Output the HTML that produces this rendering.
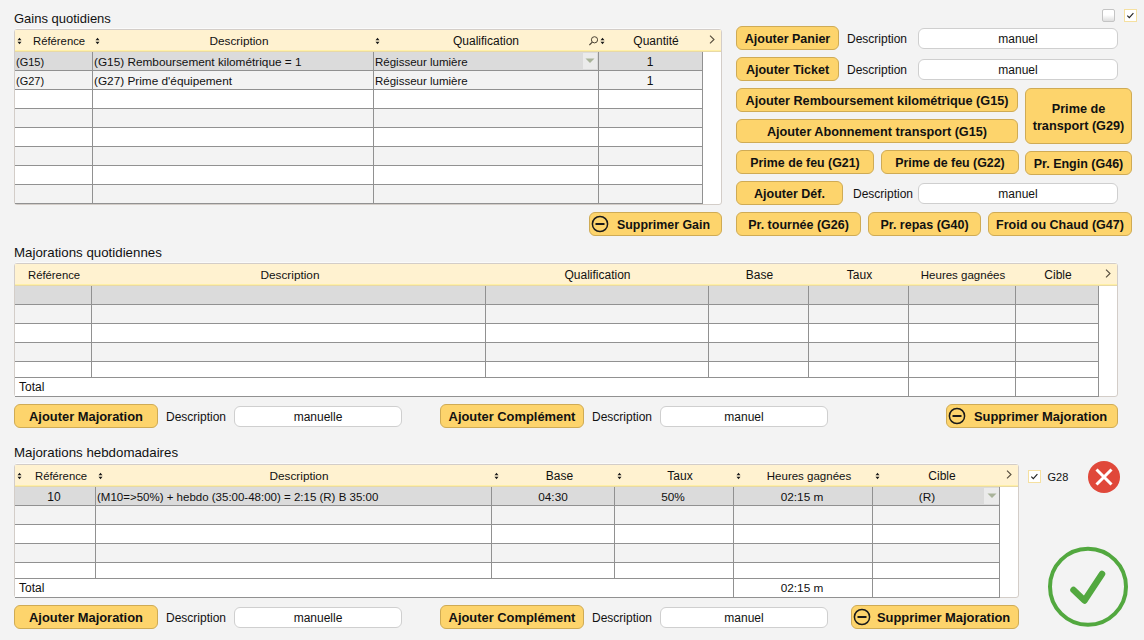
<!DOCTYPE html><html><head><meta charset="utf-8"><style>
html,body{margin:0;padding:0;}
body{width:1144px;height:640px;overflow:hidden;background:#f3f3f3;font-family:"Liberation Sans",sans-serif;position:relative;}
</style></head><body>
<div style="position:absolute;left:14px;top:11px;height:16px;line-height:16px;font-size:13px;color:#111111;white-space:nowrap;">Gains quotidiens</div>
<div style="position:absolute;left:14px;top:29px;width:706px;height:174px;background:#fff;border:1px solid #d3cdc8;border-radius:3px;"></div>
<div style="position:absolute;left:15px;top:30px;width:706px;height:21px;background:#fff2d0;border-bottom:1px solid #e8d9a6;"></div>
<div style="position:absolute;left:15px;top:50px;width:706px;height:1px;background:#fff0a6;"></div>
<div style="position:absolute;left:16px;top:28px;width:704px;height:1px;background:#fafafa;"></div>
<div style="position:absolute;left:15px;top:52px;width:687px;height:18px;background:#dbdbdb;"></div>
<div style="position:absolute;left:15px;top:70px;width:687px;height:1px;background:#919191;"></div>
<div style="position:absolute;left:15px;top:71px;width:687px;height:18px;background:#f3f3f3;"></div>
<div style="position:absolute;left:15px;top:89px;width:687px;height:1px;background:#919191;"></div>
<div style="position:absolute;left:15px;top:90px;width:687px;height:18px;background:#ffffff;"></div>
<div style="position:absolute;left:15px;top:108px;width:687px;height:1px;background:#919191;"></div>
<div style="position:absolute;left:15px;top:109px;width:687px;height:18px;background:#f3f3f3;"></div>
<div style="position:absolute;left:15px;top:127px;width:687px;height:1px;background:#919191;"></div>
<div style="position:absolute;left:15px;top:128px;width:687px;height:18px;background:#ffffff;"></div>
<div style="position:absolute;left:15px;top:146px;width:687px;height:1px;background:#919191;"></div>
<div style="position:absolute;left:15px;top:147px;width:687px;height:18px;background:#f3f3f3;"></div>
<div style="position:absolute;left:15px;top:165px;width:687px;height:1px;background:#919191;"></div>
<div style="position:absolute;left:15px;top:166px;width:687px;height:18px;background:#ffffff;"></div>
<div style="position:absolute;left:15px;top:184px;width:687px;height:1px;background:#919191;"></div>
<div style="position:absolute;left:15px;top:185px;width:687px;height:18px;background:#f3f3f3;"></div>
<div style="position:absolute;left:15px;top:203px;width:687px;height:1px;background:#919191;"></div>
<div style="position:absolute;left:92px;top:52px;width:1px;height:151px;background:#919191;"></div>
<div style="position:absolute;left:373px;top:52px;width:1px;height:151px;background:#919191;"></div>
<div style="position:absolute;left:598px;top:52px;width:1px;height:151px;background:#919191;"></div>
<div style="position:absolute;left:702px;top:52px;width:1px;height:152px;background:#919191;"></div>
<svg style="position:absolute;left:17px;top:36.5px" width="5" height="8" viewBox="0 0 5 8"><path d="M0.5 3.2 L2.5 0.8 L4.5 3.2Z M0.5 4.8 L2.5 7.2 L4.5 4.8Z" fill="#1a1a1a"/></svg>
<div style="position:absolute;left:33px;top:32.5px;height:16px;line-height:16px;font-size:11.3px;color:#111111;white-space:nowrap;">Référence</div>
<svg style="position:absolute;left:95px;top:36.5px" width="5" height="8" viewBox="0 0 5 8"><path d="M0.5 3.2 L2.5 0.8 L4.5 3.2Z M0.5 4.8 L2.5 7.2 L4.5 4.8Z" fill="#1a1a1a"/></svg>
<div style="position:absolute;left:-61px;width:600px;text-align:center;top:32.5px;height:16px;line-height:16px;font-size:11.8px;font-weight:normal;color:#111111;white-space:nowrap;">Description</div>
<svg style="position:absolute;left:375px;top:36.5px" width="5" height="8" viewBox="0 0 5 8"><path d="M0.5 3.2 L2.5 0.8 L4.5 3.2Z M0.5 4.8 L2.5 7.2 L4.5 4.8Z" fill="#1a1a1a"/></svg>
<div style="position:absolute;left:186px;width:600px;text-align:center;top:32.5px;height:16px;line-height:16px;font-size:12px;font-weight:normal;color:#111111;white-space:nowrap;">Qualification</div>
<svg style="position:absolute;left:588px;top:34.5px" width="10" height="11" viewBox="0 0 10 11"><circle cx="6.5" cy="4.8" r="3.1" fill="none" stroke="#4a4234" stroke-width="1"/><path d="M4.3 7.1 L1.4 10" stroke="#4a4234" stroke-width="1.1"/></svg>
<svg style="position:absolute;left:600px;top:36.5px" width="5" height="8" viewBox="0 0 5 8"><path d="M0.5 3.2 L2.5 0.8 L4.5 3.2Z M0.5 4.8 L2.5 7.2 L4.5 4.8Z" fill="#1a1a1a"/></svg>
<div style="position:absolute;left:356px;width:600px;text-align:center;top:32.5px;height:16px;line-height:16px;font-size:12px;font-weight:normal;color:#111111;white-space:nowrap;">Quantité</div>
<svg style="position:absolute;left:708px;top:33.5px" width="8" height="12" viewBox="0 0 8 12"><path d="M2 1.6 L6 5.5 L2 9.4" fill="none" stroke="#554c3c" stroke-width="1.1"/></svg>
<div style="position:absolute;left:16px;top:53.5px;height:16px;line-height:16px;font-size:11px;color:#111111;white-space:nowrap;">(G15)</div>
<div style="position:absolute;left:94px;top:53.5px;height:16px;line-height:16px;font-size:11.8px;color:#111111;white-space:nowrap;">(G15) Remboursement kilométrique = 1</div>
<div style="position:absolute;left:375px;top:53.5px;height:16px;line-height:16px;font-size:11.5px;color:#111111;white-space:nowrap;">Régisseur lumière</div>
<div style="position:absolute;left:350px;width:600px;text-align:center;top:53.5px;height:16px;line-height:16px;font-size:12px;font-weight:normal;color:#111111;white-space:nowrap;">1</div>
<div style="position:absolute;left:583px;top:53px;width:14px;height:16px;background:#ebebeb;"></div>
<svg style="position:absolute;left:585.0px;top:58.0px" width="10" height="6" viewBox="0 0 10 6"><path d="M0.5 0.5 L9.5 0.5 L5 5Z" fill="#a9b39a"/></svg>
<div style="position:absolute;left:16px;top:72.5px;height:16px;line-height:16px;font-size:11px;color:#111111;white-space:nowrap;">(G27)</div>
<div style="position:absolute;left:94px;top:72.5px;height:16px;line-height:16px;font-size:11.8px;color:#111111;white-space:nowrap;">(G27) Prime d'équipement</div>
<div style="position:absolute;left:375px;top:72.5px;height:16px;line-height:16px;font-size:11.5px;color:#111111;white-space:nowrap;">Régisseur lumière</div>
<div style="position:absolute;left:350px;width:600px;text-align:center;top:72.5px;height:16px;line-height:16px;font-size:12px;font-weight:normal;color:#111111;white-space:nowrap;">1</div>
<div style="position:absolute;left:589px;top:212px;width:131px;height:22px;background:#fdd46c;border:1px solid #cfab55;border-radius:6px;"></div>
<svg style="position:absolute;left:591px;top:215.0px" width="18" height="18" viewBox="0 0 18 18"><circle cx="9" cy="9" r="7.6" fill="none" stroke="#1a1a1a" stroke-width="1.5"/><rect x="4.5" y="8" width="9" height="2" fill="#1a1a1a"/></svg>
<div style="position:absolute;left:617px;top:213px;height:24px;line-height:24px;font-size:12.4px;font-weight:bold;color:#111111;white-space:nowrap;">Supprimer Gain</div>
<div style="position:absolute;left:736px;top:26px;width:101px;height:22px;background:#fdd46c;border:1px solid #cfab55;border-radius:6px;"></div>
<div style="position:absolute;left:736px;width:103px;top:27px;height:24px;line-height:24px;text-align:center;font-size:12.5px;font-weight:bold;color:#111111;white-space:nowrap;">Ajouter Panier</div>
<div style="position:absolute;left:847px;top:30.5px;height:16px;line-height:16px;font-size:12px;color:#111111;white-space:nowrap;">Description</div>
<div style="position:absolute;left:918px;top:28px;width:198px;height:19px;background:#fff;border:1px solid #cfcfcf;border-radius:6px;"></div>
<div style="position:absolute;left:918px;width:200px;top:28.5px;height:21px;line-height:21px;text-align:center;font-size:12px;color:#111111;white-space:nowrap;">manuel</div>
<div style="position:absolute;left:736px;top:57px;width:101px;height:22px;background:#fdd46c;border:1px solid #cfab55;border-radius:6px;"></div>
<div style="position:absolute;left:736px;width:103px;top:58px;height:24px;line-height:24px;text-align:center;font-size:12.5px;font-weight:bold;color:#111111;white-space:nowrap;">Ajouter Ticket</div>
<div style="position:absolute;left:847px;top:61.5px;height:16px;line-height:16px;font-size:12px;color:#111111;white-space:nowrap;">Description</div>
<div style="position:absolute;left:918px;top:59px;width:198px;height:19px;background:#fff;border:1px solid #cfcfcf;border-radius:6px;"></div>
<div style="position:absolute;left:918px;width:200px;top:59.5px;height:21px;line-height:21px;text-align:center;font-size:12px;color:#111111;white-space:nowrap;">manuel</div>
<div style="position:absolute;left:736px;top:88px;width:280px;height:22px;background:#fdd46c;border:1px solid #cfab55;border-radius:6px;"></div>
<div style="position:absolute;left:736px;width:282px;top:89px;height:24px;line-height:24px;text-align:center;font-size:12.7px;font-weight:bold;color:#111111;white-space:nowrap;">Ajouter Remboursement kilométrique (G15)</div>
<div style="position:absolute;left:1025px;top:88px;width:105px;height:54px;background:#fdd46c;border:1px solid #cfab55;border-radius:6px;"></div>
<div style="position:absolute;left:1025px;width:107px;top:100.5px;height:17px;line-height:17px;text-align:center;font-size:12.7px;font-weight:bold;color:#111111;white-space:nowrap;">Prime de</div>
<div style="position:absolute;left:1025px;width:107px;top:117.5px;height:17px;line-height:17px;text-align:center;font-size:12.7px;font-weight:bold;color:#111111;white-space:nowrap;">transport (G29)</div>
<div style="position:absolute;left:736px;top:119px;width:280px;height:22px;background:#fdd46c;border:1px solid #cfab55;border-radius:6px;"></div>
<div style="position:absolute;left:736px;width:282px;top:120px;height:24px;line-height:24px;text-align:center;font-size:12.7px;font-weight:bold;color:#111111;white-space:nowrap;">Ajouter Abonnement transport (G15)</div>
<div style="position:absolute;left:736px;top:150px;width:136px;height:22px;background:#fdd46c;border:1px solid #cfab55;border-radius:6px;"></div>
<div style="position:absolute;left:736px;width:138px;top:151px;height:24px;line-height:24px;text-align:center;font-size:12.4px;font-weight:bold;color:#111111;white-space:nowrap;">Prime de feu (G21)</div>
<div style="position:absolute;left:881px;top:150px;width:136px;height:22px;background:#fdd46c;border:1px solid #cfab55;border-radius:6px;"></div>
<div style="position:absolute;left:881px;width:138px;top:151px;height:24px;line-height:24px;text-align:center;font-size:12.4px;font-weight:bold;color:#111111;white-space:nowrap;">Prime de feu (G22)</div>
<div style="position:absolute;left:1025px;top:151px;width:105px;height:22px;background:#fdd46c;border:1px solid #cfab55;border-radius:6px;"></div>
<div style="position:absolute;left:1025px;width:107px;top:152px;height:24px;line-height:24px;text-align:center;font-size:12.5px;font-weight:bold;color:#111111;white-space:nowrap;">Pr. Engin (G46)</div>
<div style="position:absolute;left:736px;top:181px;width:105px;height:22px;background:#fdd46c;border:1px solid #cfab55;border-radius:6px;"></div>
<div style="position:absolute;left:736px;width:107px;top:182px;height:24px;line-height:24px;text-align:center;font-size:12.5px;font-weight:bold;color:#111111;white-space:nowrap;">Ajouter Déf.</div>
<div style="position:absolute;left:853px;top:185.5px;height:16px;line-height:16px;font-size:12px;color:#111111;white-space:nowrap;">Description</div>
<div style="position:absolute;left:918px;top:183px;width:198px;height:19px;background:#fff;border:1px solid #cfcfcf;border-radius:6px;"></div>
<div style="position:absolute;left:918px;width:200px;top:183.5px;height:21px;line-height:21px;text-align:center;font-size:12px;color:#111111;white-space:nowrap;">manuel</div>
<div style="position:absolute;left:736px;top:212px;width:123px;height:22px;background:#fdd46c;border:1px solid #cfab55;border-radius:6px;"></div>
<div style="position:absolute;left:736px;width:125px;top:213px;height:24px;line-height:24px;text-align:center;font-size:12.5px;font-weight:bold;color:#111111;white-space:nowrap;">Pr. tournée (G26)</div>
<div style="position:absolute;left:868px;top:212px;width:111px;height:22px;background:#fdd46c;border:1px solid #cfab55;border-radius:6px;"></div>
<div style="position:absolute;left:868px;width:113px;top:213px;height:24px;line-height:24px;text-align:center;font-size:12.5px;font-weight:bold;color:#111111;white-space:nowrap;">Pr. repas (G40)</div>
<div style="position:absolute;left:988px;top:212px;width:142px;height:22px;background:#fdd46c;border:1px solid #cfab55;border-radius:6px;"></div>
<div style="position:absolute;left:988px;width:144px;top:213px;height:24px;line-height:24px;text-align:center;font-size:12.5px;font-weight:bold;color:#111111;white-space:nowrap;">Froid ou Chaud (G47)</div>
<div style="position:absolute;left:1102px;top:9px;width:11px;height:11px;border:1px solid #c4c4c4;border-radius:2px;background:linear-gradient(#ffffff 45%,#dedede);"></div>
<div style="position:absolute;left:1124px;top:9px;width:11px;height:11px;border:1px solid #f5e0a0;background:#fff;"></div>
<svg style="position:absolute;left:1124px;top:9px" width="13" height="13" viewBox="0 0 13 13"><path d="M3.3 6.6 L5.3 8.6 L9.4 4.2" fill="none" stroke="#222" stroke-width="1.15"/></svg>
<div style="position:absolute;left:14px;top:244.5px;height:16px;line-height:16px;font-size:13.3px;color:#111111;white-space:nowrap;">Majorations quotidiennes</div>
<div style="position:absolute;left:14px;top:263px;width:1102px;height:132px;background:#fff;border:1px solid #d3cdc8;border-radius:3px;"></div>
<div style="position:absolute;left:15px;top:264px;width:1102px;height:21px;background:#fff2d0;border-bottom:1px solid #e8d9a6;"></div>
<div style="position:absolute;left:15px;top:284px;width:1102px;height:1px;background:#fff0a6;"></div>
<div style="position:absolute;left:16px;top:262px;width:1100px;height:1px;background:#fafafa;"></div>
<div style="position:absolute;left:15px;top:286px;width:1083px;height:18px;background:#dbdbdb;"></div>
<div style="position:absolute;left:15px;top:304px;width:1083px;height:1px;background:#919191;"></div>
<div style="position:absolute;left:15px;top:305px;width:1083px;height:18px;background:#f3f3f3;"></div>
<div style="position:absolute;left:15px;top:323px;width:1083px;height:1px;background:#919191;"></div>
<div style="position:absolute;left:15px;top:324px;width:1083px;height:18px;background:#ffffff;"></div>
<div style="position:absolute;left:15px;top:342px;width:1083px;height:1px;background:#919191;"></div>
<div style="position:absolute;left:15px;top:343px;width:1083px;height:18px;background:#f3f3f3;"></div>
<div style="position:absolute;left:15px;top:361px;width:1083px;height:1px;background:#919191;"></div>
<div style="position:absolute;left:15px;top:362px;width:1083px;height:15px;background:#ffffff;"></div>
<div style="position:absolute;left:15px;top:377px;width:1083px;height:1px;background:#919191;"></div>
<div style="position:absolute;left:91px;top:286px;width:1px;height:91px;background:#919191;"></div>
<div style="position:absolute;left:485px;top:286px;width:1px;height:91px;background:#919191;"></div>
<div style="position:absolute;left:708px;top:286px;width:1px;height:91px;background:#919191;"></div>
<div style="position:absolute;left:808px;top:286px;width:1px;height:91px;background:#919191;"></div>
<div style="position:absolute;left:908px;top:286px;width:1px;height:91px;background:#919191;"></div>
<div style="position:absolute;left:1015px;top:286px;width:1px;height:91px;background:#919191;"></div>
<div style="position:absolute;left:1098px;top:286px;width:1px;height:110px;background:#919191;"></div>
<div style="position:absolute;left:15px;top:378px;width:1083px;height:18px;background:#fff;"></div>
<div style="position:absolute;left:15px;top:396px;width:1084px;height:1px;background:#919191;"></div>
<div style="position:absolute;left:908px;top:378px;width:1px;height:18px;background:#919191;"></div>
<div style="position:absolute;left:1015px;top:378px;width:1px;height:18px;background:#919191;"></div>
<div style="position:absolute;left:28px;top:266.5px;height:16px;line-height:16px;font-size:11.3px;color:#111111;white-space:nowrap;">Référence</div>
<div style="position:absolute;left:-10px;width:600px;text-align:center;top:266.5px;height:16px;line-height:16px;font-size:11.8px;font-weight:normal;color:#111111;white-space:nowrap;">Description</div>
<div style="position:absolute;left:297.5px;width:600px;text-align:center;top:266.5px;height:16px;line-height:16px;font-size:12px;font-weight:normal;color:#111111;white-space:nowrap;">Qualification</div>
<div style="position:absolute;left:459.5px;width:600px;text-align:center;top:266.5px;height:16px;line-height:16px;font-size:12px;font-weight:normal;color:#111111;white-space:nowrap;">Base</div>
<div style="position:absolute;left:559.5px;width:600px;text-align:center;top:266.5px;height:16px;line-height:16px;font-size:12px;font-weight:normal;color:#111111;white-space:nowrap;">Taux</div>
<div style="position:absolute;left:663px;width:600px;text-align:center;top:266.5px;height:16px;line-height:16px;font-size:11.5px;font-weight:normal;color:#111111;white-space:nowrap;">Heures gagnées</div>
<div style="position:absolute;left:758px;width:600px;text-align:center;top:266.5px;height:16px;line-height:16px;font-size:12px;font-weight:normal;color:#111111;white-space:nowrap;">Cible</div>
<svg style="position:absolute;left:1104px;top:267.5px" width="8" height="12" viewBox="0 0 8 12"><path d="M2 1.6 L6 5.5 L2 9.4" fill="none" stroke="#554c3c" stroke-width="1.1"/></svg>
<div style="position:absolute;left:19px;top:378.5px;height:16px;line-height:16px;font-size:12px;color:#111111;white-space:nowrap;">Total</div>
<div style="position:absolute;left:14px;top:404px;width:142px;height:22px;background:#fdd46c;border:1px solid #cfab55;border-radius:6px;"></div>
<div style="position:absolute;left:14px;width:144px;top:405px;height:24px;line-height:24px;text-align:center;font-size:12.9px;font-weight:bold;color:#111111;white-space:nowrap;">Ajouter Majoration</div>
<div style="position:absolute;left:166px;top:408.5px;height:16px;line-height:16px;font-size:12px;color:#111111;white-space:nowrap;">Description</div>
<div style="position:absolute;left:234px;top:406px;width:166px;height:19px;background:#fff;border:1px solid #cfcfcf;border-radius:6px;"></div>
<div style="position:absolute;left:234px;width:168px;top:406.5px;height:21px;line-height:21px;text-align:center;font-size:12px;color:#111111;white-space:nowrap;">manuelle</div>
<div style="position:absolute;left:440px;top:404px;width:142px;height:22px;background:#fdd46c;border:1px solid #cfab55;border-radius:6px;"></div>
<div style="position:absolute;left:440px;width:144px;top:405px;height:24px;line-height:24px;text-align:center;font-size:12.9px;font-weight:bold;color:#111111;white-space:nowrap;">Ajouter Complément</div>
<div style="position:absolute;left:592px;top:408.5px;height:16px;line-height:16px;font-size:12px;color:#111111;white-space:nowrap;">Description</div>
<div style="position:absolute;left:660px;top:406px;width:166px;height:19px;background:#fff;border:1px solid #cfcfcf;border-radius:6px;"></div>
<div style="position:absolute;left:660px;width:168px;top:406.5px;height:21px;line-height:21px;text-align:center;font-size:12px;color:#111111;white-space:nowrap;">manuel</div>
<div style="position:absolute;left:946px;top:404px;width:170px;height:22px;background:#fdd46c;border:1px solid #cfab55;border-radius:6px;"></div>
<svg style="position:absolute;left:948px;top:407.0px" width="18" height="18" viewBox="0 0 18 18"><circle cx="9" cy="9" r="7.6" fill="none" stroke="#1a1a1a" stroke-width="1.5"/><rect x="4.5" y="8" width="9" height="2" fill="#1a1a1a"/></svg>
<div style="position:absolute;left:974px;top:405px;height:24px;line-height:24px;font-size:12.9px;font-weight:bold;color:#111111;white-space:nowrap;">Supprimer Majoration</div>
<div style="position:absolute;left:14px;top:445px;height:16px;line-height:16px;font-size:13.3px;color:#111111;white-space:nowrap;">Majorations hebdomadaires</div>
<div style="position:absolute;left:14px;top:464px;width:1003px;height:132px;background:#fff;border:1px solid #d3cdc8;border-radius:3px;"></div>
<div style="position:absolute;left:15px;top:465px;width:1003px;height:21px;background:#fff2d0;border-bottom:1px solid #e8d9a6;"></div>
<div style="position:absolute;left:15px;top:485px;width:1003px;height:1px;background:#fff0a6;"></div>
<div style="position:absolute;left:16px;top:463px;width:1001px;height:1px;background:#fafafa;"></div>
<div style="position:absolute;left:15px;top:487px;width:984px;height:18px;background:#dbdbdb;"></div>
<div style="position:absolute;left:15px;top:505px;width:984px;height:1px;background:#919191;"></div>
<div style="position:absolute;left:15px;top:506px;width:984px;height:18px;background:#f3f3f3;"></div>
<div style="position:absolute;left:15px;top:524px;width:984px;height:1px;background:#919191;"></div>
<div style="position:absolute;left:15px;top:525px;width:984px;height:18px;background:#ffffff;"></div>
<div style="position:absolute;left:15px;top:543px;width:984px;height:1px;background:#919191;"></div>
<div style="position:absolute;left:15px;top:544px;width:984px;height:18px;background:#f3f3f3;"></div>
<div style="position:absolute;left:15px;top:562px;width:984px;height:1px;background:#919191;"></div>
<div style="position:absolute;left:15px;top:563px;width:984px;height:15px;background:#ffffff;"></div>
<div style="position:absolute;left:15px;top:578px;width:984px;height:1px;background:#919191;"></div>
<div style="position:absolute;left:95px;top:487px;width:1px;height:91px;background:#919191;"></div>
<div style="position:absolute;left:491px;top:487px;width:1px;height:91px;background:#919191;"></div>
<div style="position:absolute;left:614px;top:487px;width:1px;height:91px;background:#919191;"></div>
<div style="position:absolute;left:733px;top:487px;width:1px;height:91px;background:#919191;"></div>
<div style="position:absolute;left:872px;top:487px;width:1px;height:91px;background:#919191;"></div>
<div style="position:absolute;left:999px;top:487px;width:1px;height:110px;background:#919191;"></div>
<div style="position:absolute;left:15px;top:579px;width:984px;height:18px;background:#fff;"></div>
<div style="position:absolute;left:15px;top:597px;width:985px;height:1px;background:#919191;"></div>
<div style="position:absolute;left:733px;top:579px;width:1px;height:18px;background:#919191;"></div>
<div style="position:absolute;left:872px;top:579px;width:1px;height:18px;background:#919191;"></div>
<svg style="position:absolute;left:17px;top:471.5px" width="5" height="8" viewBox="0 0 5 8"><path d="M0.5 3.2 L2.5 0.8 L4.5 3.2Z M0.5 4.8 L2.5 7.2 L4.5 4.8Z" fill="#1a1a1a"/></svg>
<div style="position:absolute;left:35px;top:467.5px;height:16px;line-height:16px;font-size:11.3px;color:#111111;white-space:nowrap;">Référence</div>
<svg style="position:absolute;left:98px;top:471.5px" width="5" height="8" viewBox="0 0 5 8"><path d="M0.5 3.2 L2.5 0.8 L4.5 3.2Z M0.5 4.8 L2.5 7.2 L4.5 4.8Z" fill="#1a1a1a"/></svg>
<div style="position:absolute;left:-1px;width:600px;text-align:center;top:467.5px;height:16px;line-height:16px;font-size:11.8px;font-weight:normal;color:#111111;white-space:nowrap;">Description</div>
<svg style="position:absolute;left:494px;top:471.5px" width="5" height="8" viewBox="0 0 5 8"><path d="M0.5 3.2 L2.5 0.8 L4.5 3.2Z M0.5 4.8 L2.5 7.2 L4.5 4.8Z" fill="#1a1a1a"/></svg>
<div style="position:absolute;left:259.5px;width:600px;text-align:center;top:467.5px;height:16px;line-height:16px;font-size:12px;font-weight:normal;color:#111111;white-space:nowrap;">Base</div>
<svg style="position:absolute;left:617px;top:471.5px" width="5" height="8" viewBox="0 0 5 8"><path d="M0.5 3.2 L2.5 0.8 L4.5 3.2Z M0.5 4.8 L2.5 7.2 L4.5 4.8Z" fill="#1a1a1a"/></svg>
<div style="position:absolute;left:380px;width:600px;text-align:center;top:467.5px;height:16px;line-height:16px;font-size:12px;font-weight:normal;color:#111111;white-space:nowrap;">Taux</div>
<svg style="position:absolute;left:736px;top:471.5px" width="5" height="8" viewBox="0 0 5 8"><path d="M0.5 3.2 L2.5 0.8 L4.5 3.2Z M0.5 4.8 L2.5 7.2 L4.5 4.8Z" fill="#1a1a1a"/></svg>
<div style="position:absolute;left:509px;width:600px;text-align:center;top:467.5px;height:16px;line-height:16px;font-size:11.5px;font-weight:normal;color:#111111;white-space:nowrap;">Heures gagnées</div>
<svg style="position:absolute;left:875px;top:471.5px" width="5" height="8" viewBox="0 0 5 8"><path d="M0.5 3.2 L2.5 0.8 L4.5 3.2Z M0.5 4.8 L2.5 7.2 L4.5 4.8Z" fill="#1a1a1a"/></svg>
<div style="position:absolute;left:642px;width:600px;text-align:center;top:467.5px;height:16px;line-height:16px;font-size:12px;font-weight:normal;color:#111111;white-space:nowrap;">Cible</div>
<svg style="position:absolute;left:1005px;top:468.5px" width="8" height="12" viewBox="0 0 8 12"><path d="M2 1.6 L6 5.5 L2 9.4" fill="none" stroke="#554c3c" stroke-width="1.1"/></svg>
<div style="position:absolute;left:-246px;width:600px;text-align:center;top:489px;height:16px;line-height:16px;font-size:12px;font-weight:normal;color:#111111;white-space:nowrap;">10</div>
<div style="position:absolute;left:97px;top:489px;height:16px;line-height:16px;font-size:11.5px;color:#111111;white-space:nowrap;">(M10=&gt;50%) + hebdo (35:00-48:00) = 2:15 (R) B 35:00</div>
<div style="position:absolute;left:253px;width:600px;text-align:center;top:489px;height:16px;line-height:16px;font-size:11.8px;font-weight:normal;color:#111111;white-space:nowrap;">04:30</div>
<div style="position:absolute;left:373px;width:600px;text-align:center;top:489px;height:16px;line-height:16px;font-size:11.8px;font-weight:normal;color:#111111;white-space:nowrap;">50%</div>
<div style="position:absolute;left:502px;width:600px;text-align:center;top:489px;height:16px;line-height:16px;font-size:11.8px;font-weight:normal;color:#111111;white-space:nowrap;">02:15 m</div>
<div style="position:absolute;left:627px;width:600px;text-align:center;top:489px;height:16px;line-height:16px;font-size:11.8px;font-weight:normal;color:#111111;white-space:nowrap;">(R)</div>
<div style="position:absolute;left:984px;top:488px;width:15px;height:16px;background:#ebebeb;"></div>
<svg style="position:absolute;left:986.5px;top:493.0px" width="10" height="6" viewBox="0 0 10 6"><path d="M0.5 0.5 L9.5 0.5 L5 5Z" fill="#a9b39a"/></svg>
<div style="position:absolute;left:19px;top:579.5px;height:16px;line-height:16px;font-size:12px;color:#111111;white-space:nowrap;">Total</div>
<div style="position:absolute;left:502px;width:600px;text-align:center;top:579.5px;height:16px;line-height:16px;font-size:11.8px;font-weight:normal;color:#111111;white-space:nowrap;">02:15 m</div>
<div style="position:absolute;left:14px;top:605px;width:142px;height:22px;background:#fdd46c;border:1px solid #cfab55;border-radius:6px;"></div>
<div style="position:absolute;left:14px;width:144px;top:606px;height:24px;line-height:24px;text-align:center;font-size:12.9px;font-weight:bold;color:#111111;white-space:nowrap;">Ajouter Majoration</div>
<div style="position:absolute;left:166px;top:609.5px;height:16px;line-height:16px;font-size:12px;color:#111111;white-space:nowrap;">Description</div>
<div style="position:absolute;left:234px;top:607px;width:166px;height:19px;background:#fff;border:1px solid #cfcfcf;border-radius:6px;"></div>
<div style="position:absolute;left:234px;width:168px;top:607.5px;height:21px;line-height:21px;text-align:center;font-size:12px;color:#111111;white-space:nowrap;">manuelle</div>
<div style="position:absolute;left:440px;top:605px;width:142px;height:22px;background:#fdd46c;border:1px solid #cfab55;border-radius:6px;"></div>
<div style="position:absolute;left:440px;width:144px;top:606px;height:24px;line-height:24px;text-align:center;font-size:12.9px;font-weight:bold;color:#111111;white-space:nowrap;">Ajouter Complément</div>
<div style="position:absolute;left:592px;top:609.5px;height:16px;line-height:16px;font-size:12px;color:#111111;white-space:nowrap;">Description</div>
<div style="position:absolute;left:660px;top:607px;width:166px;height:19px;background:#fff;border:1px solid #cfcfcf;border-radius:6px;"></div>
<div style="position:absolute;left:660px;width:168px;top:607.5px;height:21px;line-height:21px;text-align:center;font-size:12px;color:#111111;white-space:nowrap;">manuel</div>
<div style="position:absolute;left:851px;top:605px;width:166px;height:22px;background:#fdd46c;border:1px solid #cfab55;border-radius:6px;"></div>
<svg style="position:absolute;left:853px;top:608.0px" width="18" height="18" viewBox="0 0 18 18"><circle cx="9" cy="9" r="7.6" fill="none" stroke="#1a1a1a" stroke-width="1.5"/><rect x="4.5" y="8" width="9" height="2" fill="#1a1a1a"/></svg>
<div style="position:absolute;left:877px;top:606px;height:24px;line-height:24px;font-size:12.9px;font-weight:bold;color:#111111;white-space:nowrap;">Supprimer Majoration</div>
<div style="position:absolute;left:1028px;top:470px;width:11px;height:11px;border:1px solid #f5e0a0;background:#fff;"></div>
<svg style="position:absolute;left:1028px;top:470px" width="13" height="13" viewBox="0 0 13 13"><path d="M3.3 6.6 L5.3 8.6 L9.4 4.2" fill="none" stroke="#222" stroke-width="1.15"/></svg>
<div style="position:absolute;left:1047.5px;top:468.5px;height:16px;line-height:16px;font-size:11px;color:#111111;white-space:nowrap;">G28</div>
<svg style="position:absolute;left:1086px;top:459px" width="36" height="36" viewBox="0 0 36 36"><circle cx="18" cy="18" r="16" fill="#e0483a"/><path d="M10.5 10.5 L25.5 25.5 M25.5 10.5 L10.5 25.5" stroke="#fff" stroke-width="3"/></svg>
<svg style="position:absolute;left:1046px;top:545px" width="84" height="84" viewBox="0 0 84 84"><circle cx="42" cy="41.7" r="38" fill="none" stroke="#52a83f" stroke-width="4"/><path d="M27.5 45 L38.5 55.5 L56 29" fill="none" stroke="#52a83f" stroke-width="6.5" stroke-linecap="round" stroke-linejoin="round"/></svg>
</body></html>
